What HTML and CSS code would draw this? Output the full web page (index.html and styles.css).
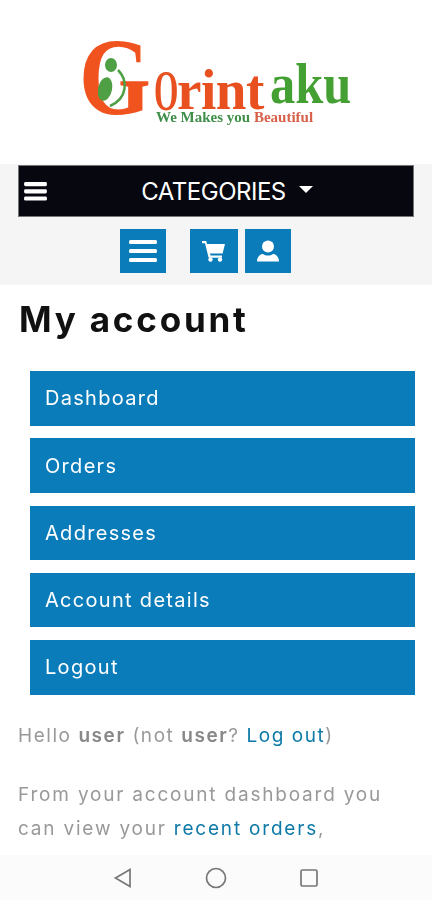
FILE: index.html
```html
<!DOCTYPE html>
<html lang="en">
<head>
<meta charset="utf-8">
<title>My account</title>
<link rel="stylesheet" href="styles.css">
</head>
<body>
<div class="viewport">
  <header class="logo-area">
    <div class="logo">
      <span class="logo-g">G</span>
      <svg class="logo-leaf" viewBox="0 0 34 54" aria-hidden="true">
        <ellipse cx="13" cy="9" rx="6" ry="7" fill="#4f9f45"/>
        <ellipse cx="7" cy="33" rx="7" ry="12" fill="#4f9f45" transform="rotate(12 7 33)"/>
        <path d="M20 14C30 24 30 42 12 50" fill="none" stroke="#4f9f45" stroke-width="2.500"/>
      </svg>
      <span class="logo-o">O</span>
      <span class="logo-rint">rint</span>
      <span class="logo-aku">aku</span>
      <div class="logo-tag"><span class="tag-green">We Makes you </span><span class="tag-red">Beautiful</span></div>
    </div>
  </header>

  <section class="nav-band">
    <div class="cat-bar">
      <svg class="cat-burger" viewBox="0 0 24 20" aria-hidden="true"><rect y="0" width="24" height="4.400" rx="1.500"/><rect y="7.600" width="24" height="4.400" rx="1.500"/><rect y="15.200" width="24" height="4.400" rx="1.500"/></svg>
      <span class="cat-label">CATEGORIES</span>
      <span class="cat-caret"></span>
    </div>
    <div class="tools">
      <a class="tool tool-menu"><svg viewBox="0 0 28 22" width="28" height="22" aria-hidden="true"><rect y="0" width="28" height="4" rx="1.500"/><rect y="9" width="28" height="4" rx="1.500"/><rect y="18" width="28" height="4" rx="1.500"/></svg></a>
      <a class="tool tool-cart"><svg viewBox="0 0 24 22" width="24" height="22" aria-hidden="true"><path d="M0 1h4.200l.8 3H23l-2.400 9.500H8l.5 2H20v2.200H6.600L3 3.200H0z"/><circle cx="8.500" cy="19.600" r="2.200"/><circle cx="18" cy="19.600" r="2.200"/></svg></a>
      <a class="tool tool-user"><svg viewBox="0 0 24 22" width="24" height="22" aria-hidden="true"><circle cx="12" cy="6.500" r="6"/><path d="M1 21.500c0-5 3.500-7.500 6-7.500 1.500 1 3 1.500 5 1.500s3.500-.5 5-1.500c2.500 0 6 2.500 6 7.500z"/></svg></a>
    </div>
  </section>

  <main class="content">
    <h1 class="title">My account</h1>
    <ul class="account-menu">
      <li><a>Dashboard</a></li>
      <li><a>Orders</a></li>
      <li><a>Addresses</a></li>
      <li><a>Account details</a></li>
      <li><a>Logout</a></li>
    </ul>
    <p class="hello">Hello <strong>user</strong> (not <strong>user</strong>? <a>Log out</a>)</p>
    <p class="intro">From your account dashboard you can view your <a>recent orders</a>,</p>
  </main>

  <footer class="android-nav">
    <svg viewBox="0 0 20 20" width="20" height="20" aria-hidden="true"><path d="M17 1.500V18.500L2.500 10z"/></svg>
    <svg viewBox="0 0 22 22" width="22" height="22" aria-hidden="true"><circle cx="11" cy="11" r="9.500"/></svg>
    <svg viewBox="0 0 20 20" width="20" height="20" aria-hidden="true"><rect x="2" y="2" width="16" height="16" rx="1.500"/></svg>
  </footer>
</div>
</body>
</html>
```
FILE: styles.css
```css
* { box-sizing: border-box; }
html, body { margin: 0; padding: 0; background: #fff; }
body { font-family: "Inter", "Liberation Sans", sans-serif; }
.viewport { width: 432px; height: 900px; display: flex; flex-direction: column; overflow: hidden; position: relative; filter: blur(0.35px); }

.logo-area { height: 164px; display: flex; justify-content: center; }
.logo { position: relative; width: 280px; height: 164px; filter: blur(0.5px); }
.logo-g { position: absolute; left: 3px; top: 22px; font: 700 110px/110px "Liberation Serif", serif; color: #f0531e; transform: scaleX(0.84); transform-origin: left top; }
.logo-leaf { position: absolute; left: 22px; top: 56px; width: 34px; height: 54px; }
.logo-o { position: absolute; left: 78px; top: 60px; font: 700 56px/62px "Liberation Serif", serif; color: #e8501f; transform: scaleX(0.56); transform-origin: left top; }
.logo-rint { position: absolute; left: 101px; top: 58px; font: 700 58px/64px "Liberation Serif", serif; color: #e8501f; transform: scaleX(0.95); transform-origin: left top; letter-spacing: -0.5px; }
.logo-aku { position: absolute; left: 194px; top: 53px; font: 700 56px/62px "Liberation Serif", serif; color: #44a032; transform: scaleX(0.9); transform-origin: left top; }
.logo-tag { position: absolute; left: 80px; top: 109px; font: 700 15px/16px "Liberation Serif", serif; white-space: nowrap; }
.tag-green { color: #3f8f4a; }
.tag-red { color: #d8604a; }

.nav-band { height: 121px; background: #f5f5f5; padding: 1px 18px 0; display: flex; flex-direction: column; }
.cat-bar { height: 52px; background: #06070f; border: 1px solid #777; display: flex; align-items: center; justify-content: center; position: relative; color: #fff; padding-left: 22px; flex: none; }
.cat-burger { position: absolute; left: 5px; top: 16px; width: 23px; height: 19px; fill: #fff; }
.cat-label { font-size: 24px; letter-spacing: -0.5px; font-weight: 400; }
.cat-caret { width: 0; height: 0; margin-left: 13px; margin-bottom: 4px; border: 7px solid transparent; border-top: 7px solid #fff; border-bottom: 0; }
.tools { display: flex; justify-content: flex-start; margin-top: 12px; padding-left: 102px; }
.tool { height: 44px; background: #0a7cba; display: flex; align-items: center; justify-content: center; fill: #fff; }
.tool-menu { width: 46px; margin-right: 24px; }
.tool-cart { width: 48px; margin-right: 7px; }
.tool-user { width: 46px; }

.content { flex: 1; padding: 0 18px; min-height: 0; overflow: hidden; }
.title { margin: 13px 0 0 1px; font-size: 35px; line-height: 42px; font-weight: 700; letter-spacing: 2.800px; color: #111; }
.account-menu { list-style: none; margin: 31px 0 0 12px; padding: 0; display: flex; flex-direction: column; gap: 12.750px; width: 385px; }
.account-menu li a { display: flex; align-items: center; height: 54.500px; background: #0a7cba; color: #fff; padding-left: 15px; font-size: 20px; letter-spacing: 1.300px; }
.hello, .intro { margin: 0; color: #999; font-size: 19px; }
.hello { margin-top: 26px; line-height: 30px; letter-spacing: 1.550px; }
.hello strong { font-weight: 600; color: #888; }
.hello a, .intro a { color: #0f7aa8; }
.intro { margin-top: 27px; line-height: 34px; width: 385px; letter-spacing: 1.800px; }

.android-nav { position: absolute; left: 0; right: 0; bottom: 0; height: 45px; background: #fbfbfb; display: flex; align-items: center; justify-content: center; gap: 72px; }
.android-nav svg { fill: none; stroke: #777; stroke-width: 1.700; }
```
